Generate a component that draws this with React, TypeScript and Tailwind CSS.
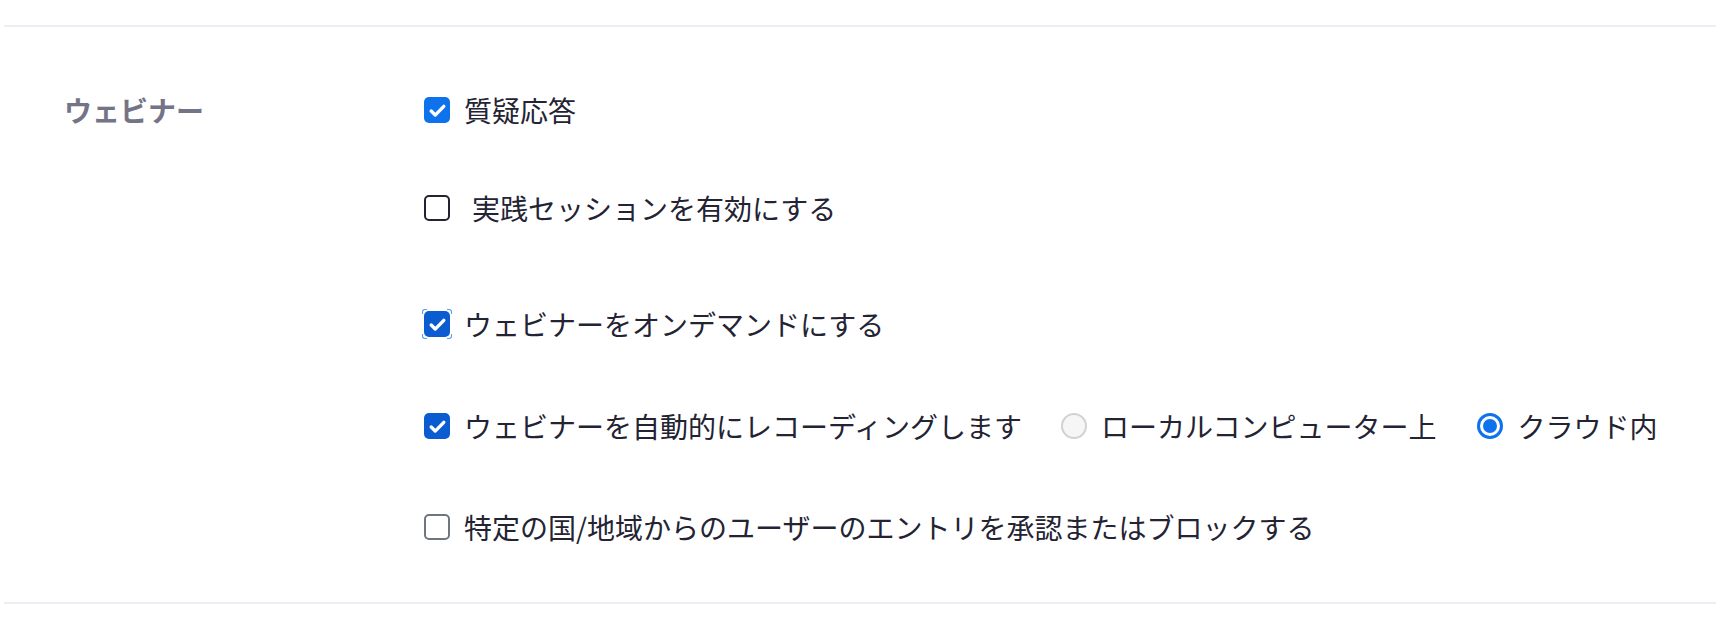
import { ReactNode } from 'react';

const font = { fontFamily: '"Noto Sans CJK JP", "Noto Sans", sans-serif' };

function CheckIcon() {
  return (
    <svg viewBox="0 0 24 24" className="w-[21px] h-[21px]" fill="none">
      <path d="M4.8 12.6l4.6 4.6L19.2 7.2" stroke="white" strokeWidth="3.8" strokeLinecap="round" strokeLinejoin="round" />
    </svg>
  );
}

function Checkbox({ checked, dark, focused, gray }: { checked?: boolean; dark?: boolean; focused?: boolean; gray?: boolean }) {
  if (!checked) {
    return (
      <span
        className={`block w-[26px] h-[26px] shrink-0 rounded-[5px] border-2 bg-white ${gray ? 'border-[#6e7680]' : 'border-[#232333]'}`}
      />
    );
  }
  return (
    <span className="relative block w-[26px] h-[26px] shrink-0">
      <span
        className={`flex w-full h-full items-center justify-center rounded-[5px] ${dark ? 'bg-[#0b5cd0]' : 'bg-[#0e72ed]'}`}
      >
        <CheckIcon />
      </span>
      {focused && (
        <>
          <span className="absolute -left-[2px] -top-[2px] w-[5px] h-[5px] border-l border-t border-[#5b9cf2] rounded-tl-[3px]" />
          <span className="absolute -right-[2px] -top-[2px] w-[5px] h-[5px] border-r border-t border-[#5b9cf2] rounded-tr-[3px]" />
          <span className="absolute -left-[2px] -bottom-[2px] w-[5px] h-[5px] border-l border-b border-[#5b9cf2] rounded-bl-[3px]" />
          <span className="absolute -right-[2px] -bottom-[2px] w-[5px] h-[5px] border-r border-b border-[#5b9cf2] rounded-br-[3px]" />
        </>
      )}
    </span>
  );
}

function Radio({ selected }: { selected?: boolean }) {
  if (selected) {
    return (
      <span className="flex w-[26px] h-[26px] shrink-0 items-center justify-center rounded-full border-[3px] border-[#0e72ed] bg-white">
        <span className="block w-[14px] h-[14px] rounded-full bg-[#0e72ed]" />
      </span>
    );
  }
  return <span className="block w-[26px] h-[26px] shrink-0 rounded-full border-2 border-[#d2d2d6] bg-[#f6f6f7]" />;
}

function Row({ className, children }: { className?: string; children: ReactNode }) {
  return <div className={`flex items-center h-[40px] ${className ?? ''}`}>{children}</div>;
}

export default function App() {
  return (
    <div className="w-full h-[636px] bg-white overflow-hidden text-[#232333]" style={font}>
      <div className="ml-[4px] mt-[25px] border-t-2 border-b-2 border-[#ededf4] pl-[60px] pt-[63px] pb-[55px] flex">
        <div className="w-[360px] shrink-0">
          <div className="h-[40px] flex items-center text-[28px] font-bold text-[#747487] leading-[40px]">
            ウェビナー
          </div>
        </div>

        <div className="flex flex-col text-[28px] leading-[40px]">
          <Row>
            <Checkbox checked />
            <span className="ml-[14px]">質疑応答</span>
          </Row>

          <Row className="mt-[58px]">
            <Checkbox />
            <span className="ml-[22px]">実践セッションを有効にする</span>
          </Row>

          <Row className="mt-[76px]">
            <Checkbox checked dark focused />
            <span className="ml-[14px]">ウェビナーをオンデマンドにする</span>
          </Row>

          <Row className="mt-[62px]">
            <Checkbox checked dark />
            <span className="ml-[14px]">ウェビナーを自動的にレコーディングします</span>
            <span className="ml-[39px]">
              <Radio />
            </span>
            <span className="ml-[14px]">ローカルコンピューター上</span>
            <span className="ml-[40px]">
              <Radio selected />
            </span>
            <span className="ml-[15px]">クラウド内</span>
          </Row>

          <Row className="mt-[61px]">
            <Checkbox gray />
            <span className="ml-[14px]">特定の国/地域からのユーザーのエントリを承認またはブロックする</span>
          </Row>
        </div>
      </div>
    </div>
  );
}
